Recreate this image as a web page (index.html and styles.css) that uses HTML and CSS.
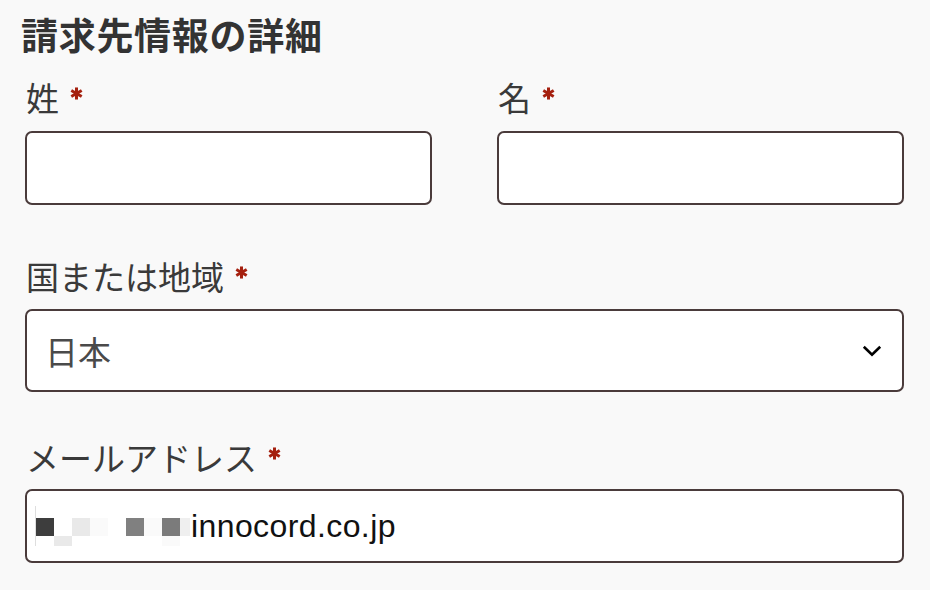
FILE: index.html
```html
<!DOCTYPE html>
<html lang="ja">
<head>
<meta charset="utf-8">
<title>請求先情報の詳細</title>
<link rel="stylesheet" href="styles.css">
</head>
<body>
<main class="form">
  <h2 class="title">請求先情報の詳細</h2>

  <div class="name-row">
    <div class="field">
      <label class="label">姓<svg class="req" viewBox="0 0 14 14" width="13" height="13"><g stroke="currentColor" stroke-width="3.2"><line x1="7" y1="0.5" x2="7" y2="13.5"/><line x1="1.4" y1="3.75" x2="12.6" y2="10.25"/><line x1="1.4" y1="10.25" x2="12.6" y2="3.75"/></g></svg></label>
      <div class="input"></div>
    </div>
    <div class="field">
      <label class="label">名<svg class="req" viewBox="0 0 14 14" width="13" height="13"><g stroke="currentColor" stroke-width="3.2"><line x1="7" y1="0.5" x2="7" y2="13.5"/><line x1="1.4" y1="3.75" x2="12.6" y2="10.25"/><line x1="1.4" y1="10.25" x2="12.6" y2="3.75"/></g></svg></label>
      <div class="input"></div>
    </div>
  </div>

  <div class="field field-country">
    <label class="label">国または地域<svg class="req" viewBox="0 0 14 14" width="13" height="13"><g stroke="currentColor" stroke-width="3.2"><line x1="7" y1="0.5" x2="7" y2="13.5"/><line x1="1.4" y1="3.75" x2="12.6" y2="10.25"/><line x1="1.4" y1="10.25" x2="12.6" y2="3.75"/></g></svg></label>
    <div class="select">
      <span class="select-value">日本</span>
      <svg class="chevron" viewBox="0 0 20 12" width="20" height="12"><path d="M1.8 1.8 L10 9.8 L18.2 1.8" fill="none" stroke="#000" stroke-width="2.6" stroke-linejoin="miter"/></svg>
    </div>
  </div>

  <div class="field field-email">
    <label class="label">メールアドレス<svg class="req" viewBox="0 0 14 14" width="13" height="13"><g stroke="currentColor" stroke-width="3.2"><line x1="7" y1="0.5" x2="7" y2="13.5"/><line x1="1.4" y1="3.75" x2="12.6" y2="10.25"/><line x1="1.4" y1="10.25" x2="12.6" y2="3.75"/></g></svg></label>
    <div class="input input-email">
      <span class="mosaic" aria-hidden="true">
        <span class="m-line"></span><span></span><span></span><span></span><span></span><span></span><span></span><span></span><span></span><span></span>
        <span class="m-line"></span><span class="m-dark"></span><span></span><span class="m-light"></span><span class="m-faint"></span><span></span><span class="m-mid"></span><span class="m-faint"></span><span class="m-mid2"></span><span class="m-pale"></span>
        <span class="m-line"></span><span></span><span class="m-light"></span><span></span><span></span><span></span><span></span><span></span><span class="m-faint"></span><span></span>
      </span>
      <span class="email-text">innocord.co.jp</span>
    </div>
  </div>
</main>
</body>
</html>
```

FILE: styles.css
```css
html, body {
  margin: 0;
  padding: 0;
  background: #f9f9f9;
}

body {
  font-family: "Noto Sans CJK JP", "Noto Sans", sans-serif;
  color: #333333;
}

.form {
  display: flex;
  flex-direction: column;
  padding: 12px 26px 0 25px;
}

.title {
  margin: 0 0 0 -4px;
  font-size: 37px;
  line-height: 44px;
  font-weight: 700;
  letter-spacing: 0.7px;
  color: #333333;
}

.name-row {
  display: grid;
  grid-template-columns: 1fr 1fr;
  column-gap: 65px;
  margin-top: 21px;
}

.field {
  display: flex;
  flex-direction: column;
}

.label {
  display: flex;
  align-items: flex-start;
  font-size: 33px;
  line-height: 40px;
  font-weight: 400;
  color: #3a3a3a;
  margin: 0 0 14px 1px;
}

.req {
  color: #a5200f;
  margin-left: 11px;
  margin-top: 10px;
  flex: none;
}

.input {
  box-sizing: border-box;
  height: 74px;
  background: #ffffff;
  border: 2px solid #4a3b3b;
  border-radius: 7px;
}

.field-country {
  margin-top: 51px;
}

.field-country .label {
  margin-bottom: 13px;
}

.select {
  box-sizing: border-box;
  height: 83px;
  display: flex;
  align-items: center;
  justify-content: space-between;
  background: #ffffff;
  border: 2px solid #4a3b3b;
  border-radius: 7px;
  padding: 0 20px 0 18px;
}

.select-value {
  font-size: 33px;
  line-height: 40px;
  color: #4a4a4a;
}

.chevron {
  display: block;
  flex: none;
}

.field-email {
  margin-top: 45px;
}

.field-email .label {
  margin-bottom: 12px;
}

.input-email {
  display: flex;
  align-items: center;
  padding-left: 8px;
}

.mosaic {
  display: grid;
  grid-template-columns: 1px repeat(8, 18px) 10px;
  grid-template-rows: 12px 18px 10px;
  margin-right: 1px;
}

.mosaic > span {
  background: #ffffff;
}

.mosaic > .m-line { background: #dedede; }
.mosaic > .m-dark { background: #3d3d3d; }
.mosaic > .m-light { background: #e9e9e9; }
.mosaic > .m-faint { background: #fafafa; }
.mosaic > .m-mid { background: #808080; }
.mosaic > .m-mid2 { background: #7b7b7b; }
.mosaic > .m-pale { background: #efefef; }

.email-text {
  font-family: "Liberation Sans", Arial, sans-serif;
  font-size: 32px;
  line-height: 36px;
  letter-spacing: 0.4px;
  color: #111111;
}
```
